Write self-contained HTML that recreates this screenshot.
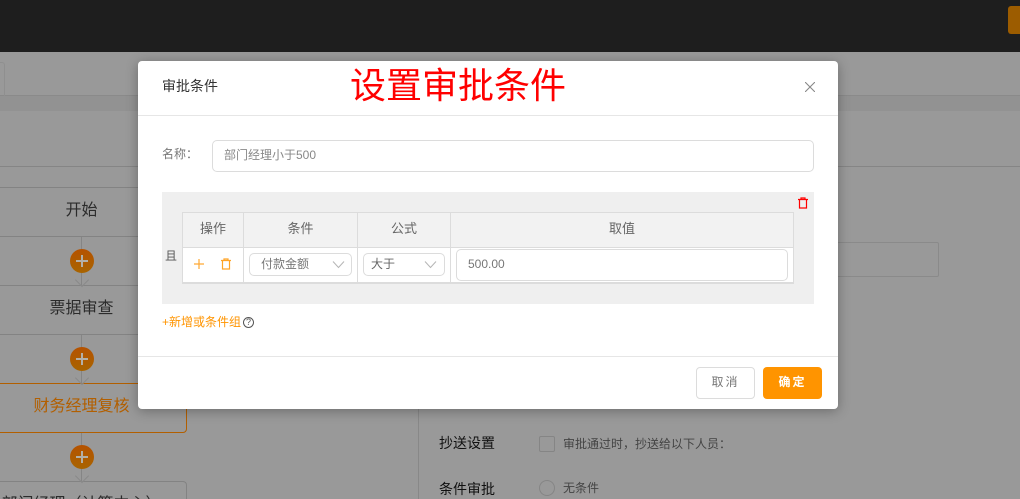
<!DOCTYPE html>
<html lang="zh"><head><meta charset="utf-8"><title>设置审批条件</title>
<style>
html,body{margin:0;padding:0;width:1020px;height:499px;overflow:hidden;background:#999}
#wrap{position:absolute;left:0;top:0;width:1020px;height:499px;overflow:hidden;background:#999;font-family:"Liberation Sans","Noto Sans CJK SC",sans-serif;color:#333}
.a{position:absolute;box-sizing:border-box}
.t{position:absolute;white-space:nowrap;line-height:20px}
.node{position:absolute;box-sizing:border-box;left:-24px;width:211px;height:50px;border:1px solid #838383;border-radius:4px;text-align:center;font-size:16px;line-height:46px;color:#2b2b2b;white-space:nowrap}
.circ{position:absolute;left:70px;width:24px;height:24px;border-radius:50%;background:linear-gradient(#b55200,#a86400)}
.circ:before{content:"";position:absolute;left:6px;top:11px;width:12px;height:2px;background:#b3b0a8}
.circ:after{content:"";position:absolute;left:11px;top:6px;width:2px;height:12px;background:#b3b0a8}
.v{position:absolute;left:81px;width:1px;background:#858585}
.arr{position:absolute;left:77px;width:9px;height:9px;border-right:1px solid #8a8a8a;border-bottom:1px solid #8a8a8a;transform:rotate(45deg)}
.dlg{position:absolute;left:138px;top:61px;width:700px;height:348px;background:#fff;border-radius:4px;box-shadow:0 2px 12px rgba(0,0,0,.3)}
.inp{position:absolute;box-sizing:border-box;background:#fff;border:1px solid #dcdcdc;border-radius:5px}
.cell{position:absolute;box-sizing:border-box;text-align:center;font-size:13px;color:#666;line-height:33px}
.line{position:absolute;background:#dcdcdc}
</style></head><body><div id="wrap">
<div class="a" style="left:0;top:0;width:1020px;height:52px;background:#1e1e1e"></div>
<div class="a" style="left:1008px;top:6px;width:12px;height:28px;background:#9c5c00;border-radius:3px 0 0 3px"></div>

<div class="a" style="left:0;top:95px;width:1020px;height:16px;background:#929292"></div>
<div class="a" style="left:0;top:95px;width:1020px;height:1px;background:#8a8a8a"></div>
<div class="a" style="left:-5px;top:62px;width:10px;height:34px;border:1px solid #8f8f8f;border-bottom:0;border-radius:0 3px 0 0"></div>
<div class="a" style="left:0;top:166px;width:1020px;height:1px;background:#858585"></div>

<div class="v" style="top:236px;height:50px"></div>
<div class="v" style="top:334px;height:50px"></div>
<div class="v" style="top:432px;height:50px"></div>
<div class="node" style="top:187px">开始</div>
<div class="node" style="top:285px">票据审查</div>
<div class="node" style="top:383px;border-color:#b25f00;color:#b25f00">财务经理复核</div>
<div class="node" style="top:481px;height:18px;overflow:hidden;border-bottom:0;border-radius:4px 4px 0 0">部门经理（计算中心）</div>
<div class="circ" style="top:249px"></div><div class="arr" style="top:275px"></div>
<div class="circ" style="top:347px"></div><div class="arr" style="top:373px"></div>
<div class="circ" style="top:445px"></div><div class="arr" style="top:471px"></div>

<div class="a" style="left:418px;top:111px;width:1px;height:388px;background:#888"></div>
<div class="a" style="left:700px;top:242px;width:239px;height:35px;border:1px solid #8a8a8a;border-radius:2px"></div>
<div class="t" style="left:439px;top:433px;font-size:14px;color:#111">抄送设置</div>
<div class="a" style="left:539px;top:436px;width:16px;height:16px;border:1px solid #858585;border-radius:2px"></div>
<div class="t" style="left:563px;top:434px;font-size:12px;color:#444">审批通过时，抄送给以下人员：</div>
<div class="t" style="left:439px;top:479px;font-size:14px;color:#111">条件审批</div>
<div class="a" style="left:539px;top:480px;width:16px;height:16px;border:1px solid #858585;border-radius:50%"></div>
<div class="t" style="left:563px;top:478px;font-size:12px;color:#444">无条件</div>

<div class="dlg"></div>
<div class="t" style="left:162px;top:76px;font-size:14px;color:#333">审批条件</div>
<div class="t" style="left:350px;top:63px;font-size:36px;line-height:46px;color:#f00">设置审批条件</div>
<svg class="a" style="left:805px;top:82px" width="10" height="10" viewBox="0 0 10 10"><path d="M0 0l10 10M10 0L0 10" stroke="#888" stroke-width="1.100" fill="none"/></svg>
<div class="a" style="left:138px;top:115px;width:700px;height:1px;background:#e6e6e6"></div>

<div class="t" style="left:162px;top:144px;font-size:12px;color:#777">名称：</div>
<div class="inp" style="left:212px;top:140px;width:602px;height:32px"></div>
<div class="t" style="left:224px;top:145px;font-size:12px;color:#888">部门经理小于500</div>

<div class="a" style="left:162px;top:192px;width:652px;height:112px;background:#efefef"></div>
<svg class="a" style="left:797px;top:197px" width="12" height="12" viewBox="0 0 12 12"><path d="M1 2.500h10M4 2.500V1h4v1.500M2.500 3v8h7V3" stroke="#f00" stroke-width="1.200" fill="none"/></svg>
<div class="t" style="left:165px;top:246px;font-size:12px;color:#555">且</div>

<div class="a" style="left:182px;top:212px;width:612px;height:72px;background:#fff"></div>
<div class="a" style="left:182px;top:212px;width:612px;height:36px;background:#f2f2f2"></div>
<div class="line" style="left:182px;top:212px;width:612px;height:1px"></div>
<div class="line" style="left:182px;top:247px;width:612px;height:1px"></div>
<div class="line" style="left:182px;top:282px;width:612px;height:2px"></div>
<div class="line" style="left:182px;top:212px;width:1px;height:72px"></div>
<div class="line" style="left:243px;top:212px;width:1px;height:72px"></div>
<div class="line" style="left:357px;top:212px;width:1px;height:72px"></div>
<div class="line" style="left:450px;top:212px;width:1px;height:72px"></div>
<div class="line" style="left:793px;top:212px;width:1px;height:72px"></div>
<div class="cell" style="left:183px;top:212px;width:60px">操作</div>
<div class="cell" style="left:244px;top:212px;width:113px">条件</div>
<div class="cell" style="left:358px;top:212px;width:92px">公式</div>
<div class="cell" style="left:451px;top:212px;width:342px">取值</div>

<svg class="a" style="left:193px;top:258px" width="12" height="12" viewBox="0 0 12 12"><path d="M1 6h10M6 1v10" stroke="#ff9400" stroke-width="1.200" opacity=".8" fill="none"/></svg>
<svg class="a" style="left:220px;top:258px" width="12" height="12" viewBox="0 0 12 12"><path d="M1 2.500h10M4 2.500V1h4v1.500M2.500 3v8h7V3" stroke="#ff9400" stroke-width="1.200" opacity=".85" fill="none"/></svg>

<div class="inp" style="left:249px;top:253px;width:103px;height:23px"></div>
<div class="t" style="left:261px;top:254px;font-size:12px;color:#777">付款金额</div>
<svg class="a" style="left:332px;top:260px" width="13" height="9" viewBox="0 0 13 9"><path d="M1 1.500l5.500 6 5.500-6" stroke="#b5b5b5" fill="none"/></svg>
<div class="inp" style="left:363px;top:253px;width:82px;height:23px"></div>
<div class="t" style="left:371px;top:254px;font-size:12px;color:#666">大于</div>
<svg class="a" style="left:424px;top:260px" width="13" height="9" viewBox="0 0 13 9"><path d="M1 1.500l5.500 6 5.500-6" stroke="#b5b5b5" fill="none"/></svg>
<div class="inp" style="left:456px;top:249px;width:332px;height:32px"></div>
<div class="t" style="left:468px;top:254px;font-size:12px;color:#777">500.00</div>

<div class="t" style="left:162px;top:312px;font-size:12px;color:#ff9400">+新增或条件组</div>
<div class="a" style="left:243px;top:317px;width:11px;height:11px;border:1px solid #555;border-radius:50%;font-size:9px;line-height:9px;text-align:center;color:#555">?</div>

<div class="a" style="left:138px;top:356px;width:700px;height:1px;background:#e6e6e6"></div>
<div class="a" style="left:696px;top:367px;width:59px;height:32px;border:1px solid #dcdcdc;border-radius:4px;text-align:center;font-size:12px;line-height:28px;color:#777;letter-spacing:2px">取消</div>
<div class="a" style="left:763px;top:367px;width:59px;height:32px;background:#ff9400;border-radius:4px;text-align:center;font-size:12px;line-height:30px;color:#fff;letter-spacing:2px;font-weight:bold">确定</div>
</div></body></html>
